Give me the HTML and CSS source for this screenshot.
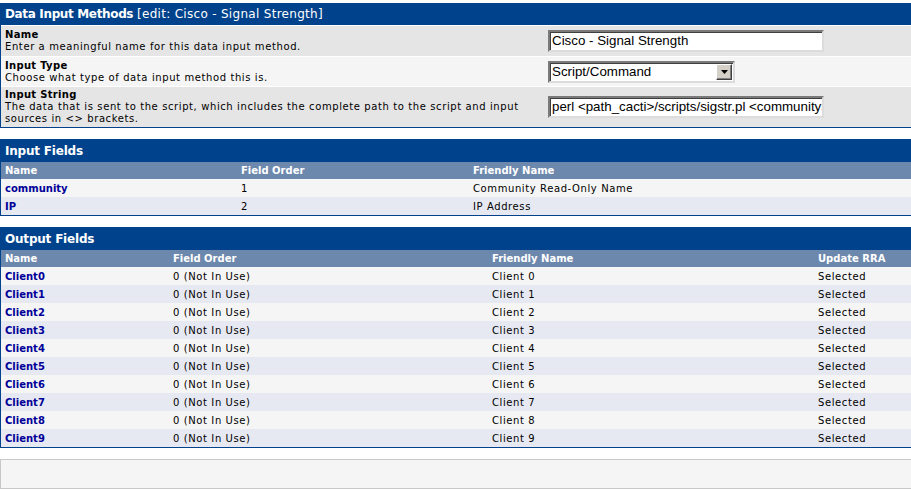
FILE: index.html
```html
<!DOCTYPE html>
<html>
<head>
<meta charset="utf-8">
<title>Data Input Methods</title>
<link rel="stylesheet" href="styles.css">
</head>
<body>
<div class="page">
  <section class="box">
    <div class="box-title"><b>Data Input Methods</b> <span class="sub">[edit: Cisco - Signal Strength]</span></div>
    <div class="form-row dark r-name">
      <div class="form-label"><b>Name</b><br>Enter a meaningful name for this data input method.</div>
      <div class="form-ctrl"><div class="textbox">Cisco - Signal Strength</div></div>
    </div>
    <div class="form-row light r-type">
      <div class="form-label"><b>Input Type</b><br>Choose what type of data input method this is.</div>
      <div class="form-ctrl"><div class="selectbox"><span class="sel-text">Script/Command</span><span class="sel-btn"><svg width="7" height="4" viewBox="0 0 7 4"><path d="M0 0h7L3.5 4z" fill="#000"/></svg></span></div></div>
    </div>
    <div class="form-row dark r-str">
      <div class="form-label"><b>Input String</b><br>The data that is sent to the script, which includes the complete path to the script and input sources in &lt;&gt; brackets.</div>
      <div class="form-ctrl"><div class="textbox clip">perl &lt;path_cacti&gt;/scripts/sigstr.pl &lt;community&gt; &lt;ip&gt;</div></div>
    </div>
  </section>

  <section class="box">
    <div class="box-title bold">Input Fields</div>
    <div class="grid g-in head"><span>Name</span><span>Field Order</span><span>Friendly Name</span></div>
    <div class="grid g-in row light"><a>community</a><span>1</span><span>Community Read-Only Name</span></div>
    <div class="grid g-in row alt"><a>IP</a><span>2</span><span>IP Address</span></div>
  </section>

  <section class="box">
    <div class="box-title bold">Output Fields</div>
    <div class="grid g-out head"><span>Name</span><span>Field Order</span><span>Friendly Name</span><span>Update RRA</span></div>
    <div class="grid g-out row light"><a>Client0</a><span>0 (Not In Use)</span><span>Client 0</span><span>Selected</span></div>
    <div class="grid g-out row alt"><a>Client1</a><span>0 (Not In Use)</span><span>Client 1</span><span>Selected</span></div>
    <div class="grid g-out row light"><a>Client2</a><span>0 (Not In Use)</span><span>Client 2</span><span>Selected</span></div>
    <div class="grid g-out row alt"><a>Client3</a><span>0 (Not In Use)</span><span>Client 3</span><span>Selected</span></div>
    <div class="grid g-out row light"><a>Client4</a><span>0 (Not In Use)</span><span>Client 4</span><span>Selected</span></div>
    <div class="grid g-out row alt"><a>Client5</a><span>0 (Not In Use)</span><span>Client 5</span><span>Selected</span></div>
    <div class="grid g-out row light"><a>Client6</a><span>0 (Not In Use)</span><span>Client 6</span><span>Selected</span></div>
    <div class="grid g-out row alt"><a>Client7</a><span>0 (Not In Use)</span><span>Client 7</span><span>Selected</span></div>
    <div class="grid g-out row light"><a>Client8</a><span>0 (Not In Use)</span><span>Client 8</span><span>Selected</span></div>
    <div class="grid g-out row alt"><a>Client9</a><span>0 (Not In Use)</span><span>Client 9</span><span>Selected</span></div>
  </section>

  <div class="footer-box"></div>
</div>
</body>
</html>
```

FILE: styles.css
```css
html, body {
  margin: 0;
  padding: 0;
  background: #fff;
}
body {
  font-family: "DejaVu Sans", Verdana, sans-serif;
  font-size: 10px;
  color: #000;
  letter-spacing: 0.6px;
}
b, a, .head {
  letter-spacing: 0;
}
.page {
  padding-top: 3px;
  width: 913px;
}
.box {
  border: 1px solid #00438C;
  margin-bottom: 11px;
}
.box-title {
  background: #00438C;
  color: #fff;
  font-size: 12px;
  height: 21px;
  line-height: 21px;
  padding-left: 4px;
  letter-spacing: 0;
}
.box-title b {
  letter-spacing: -0.35px;
}
.box-title .sub {
  letter-spacing: 0.3px;
}
.box-title.bold {
  font-weight: bold;
  height: 22px;
  line-height: 22px;
  letter-spacing: -0.2px;
}
.form-row {
  display: flex;
  align-items: center;
  border-top: 1px solid #fff;
}
.form-row.dark { background: #E5E5E5; }
.form-row.light { background: #F5F5F5; }
.r-name { height: 30px; }
.r-type { height: 29px; }
.r-str { height: 40px; }
.form-label {
  flex: 1;
  padding-left: 4px;
  line-height: 12px;
  padding-right: 16px;
}
.form-label b {
  letter-spacing: 0.3px;
}
.form-ctrl {
  width: 364px;
  flex: none;
}
.textbox {
  box-sizing: border-box;
  width: 276px;
  height: 22px;
  background: #fff;
  border: 2px solid;
  border-color: #7a7a7a #dcdcdc #dcdcdc #7a7a7a;
  box-shadow: inset 1px 1px 0 #404040;
  font-family: "Liberation Sans", Arial, sans-serif;
  font-size: 13.33px;
  letter-spacing: 0;
  line-height: 18px;
  padding-left: 2px;
  white-space: nowrap;
  overflow: hidden;
}
.selectbox {
  box-sizing: border-box;
  width: 187px;
  height: 22px;
  background: #fff;
  border: 2px solid;
  border-color: #7a7a7a #dcdcdc #dcdcdc #7a7a7a;
  box-shadow: inset 1px 1px 0 #404040;
  font-family: "Liberation Sans", Arial, sans-serif;
  font-size: 13.33px;
  letter-spacing: 0;
  display: flex;
  align-items: center;
  justify-content: space-between;
}
.sel-text { padding-left: 2px; line-height: 18px; }
.sel-btn {
  box-sizing: border-box;
  width: 16px;
  height: 16px;
  margin-right: 1px;
  background: #D4D0C8;
  border: 1px solid;
  border-color: #fff #404040 #404040 #fff;
  box-shadow: inset -1px -1px 0 #808080;
  display: flex;
  align-items: center;
  justify-content: center;
}
.grid {
  display: grid;
  align-items: center;
  padding-left: 4px;
}
.g-in { grid-template-columns: 236px 232px 1fr; }
.g-out { grid-template-columns: 168px 319px 326px 1fr; }
.head {
  background: #6D88AD;
  color: #fff;
  font-weight: bold;
  height: 17px;
}
.row { height: 18px; }
.row.light { background: #F5F5F5; }
.row.alt { background: #E7E9F2; }
.row a {
  color: #000099;
  font-weight: bold;
}
.footer-box {
  height: 28px;
  background: #F5F5F5;
  border: 1px solid #C8C8C8;
  margin-top: 1px;
}
```
